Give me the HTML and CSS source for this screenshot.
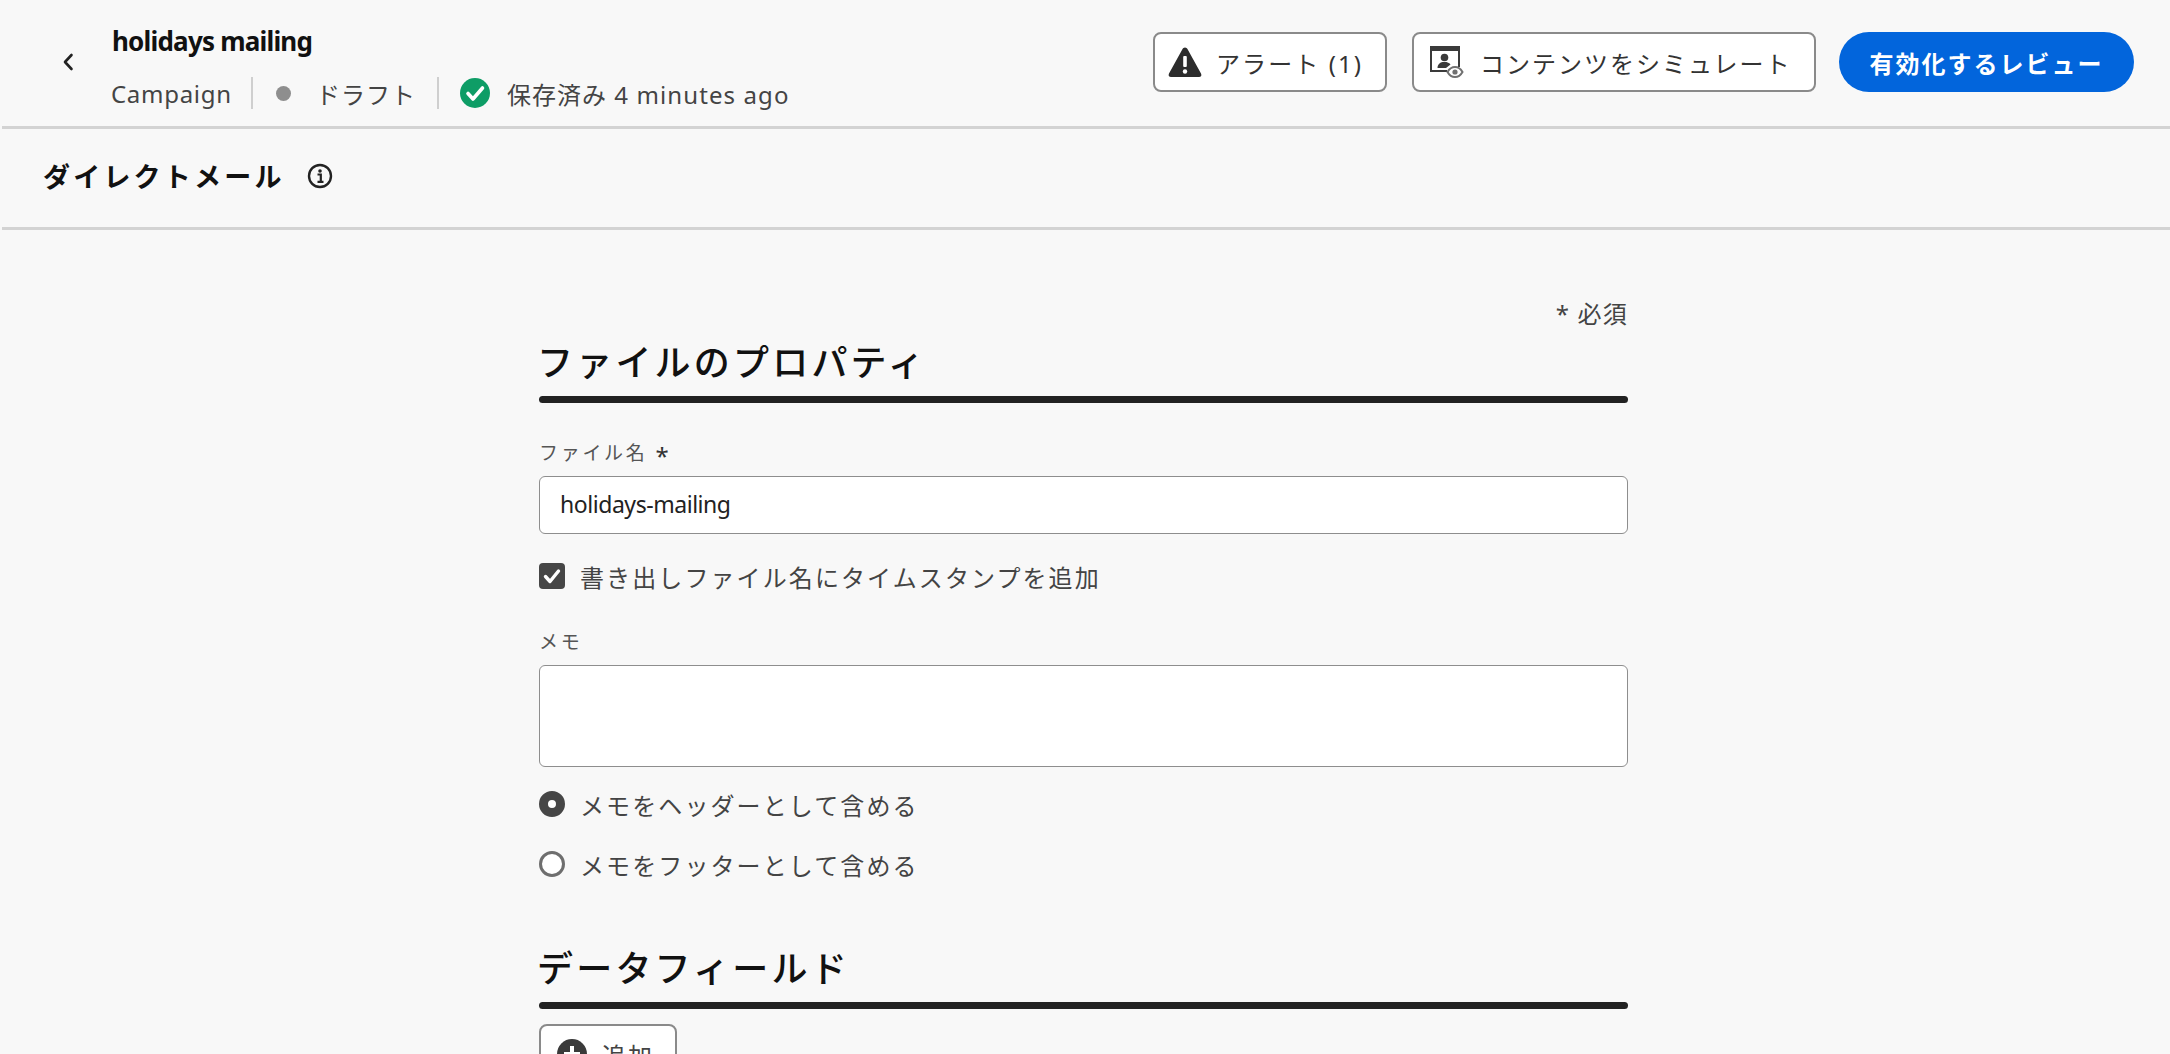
FILE: index.html
```html
<!DOCTYPE html>
<html lang="ja">
<head>
<meta charset="utf-8">
<title>holidays mailing</title>
<link rel="stylesheet" href="styles.css">
</head>
<body>
<header class="topbar">
  <div class="top-left">
    <svg class="back" viewBox="0 0 14 20"><path d="M10.5 3 L4 10 L10.5 17" fill="none" stroke="#222" stroke-width="2.6" stroke-linecap="round" stroke-linejoin="round"/></svg>
    <div class="title-block">
      <div class="title">holidays mailing</div>
      <div class="meta">
        <span class="meta-item">Campaign</span>
        <span class="meta-sep"></span>
        <span class="dot"></span>
        <span class="meta-jp">ドラフト</span>
        <span class="meta-sep sep2"></span>
        <svg class="ok" viewBox="0 0 30 30"><circle cx="15" cy="15" r="15" fill="#0e9d66"/><path d="M8 15.5 L13 21 L22.5 10" fill="none" stroke="#fff" stroke-width="3.6" stroke-linecap="round" stroke-linejoin="round"/></svg>
        <span class="saved"><span class="jp-saved">保存済み</span> 4 minutes ago</span>
      </div>
    </div>
  </div>
  <div class="actions">
    <button class="btn btn-alert">
      <svg class="ic-alert" viewBox="0 0 34 32"><path d="M17 1.5 C18.2 1.5 19 2.2 19.6 3.3 L33 27.5 C34 29.5 33 31 31 31 H3 C1 31 0 29.5 1 27.5 L14.4 3.3 C15 2.2 15.8 1.5 17 1.5Z" fill="#2c2c2c"/><rect x="15.2" y="10" width="3.6" height="11" rx="1" fill="#fff"/><circle cx="17" cy="25.5" r="2.2" fill="#fff"/></svg>
      <span>アラート (1)</span>
    </button>
    <button class="btn btn-sim">
      <svg class="ic-sim" viewBox="0 0 34 32"><path d="M17 25 H1 V1 H29 V21" fill="none" stroke="#3a3a3a" stroke-width="2"/><rect x="0" y="0" width="30" height="5" fill="#3a3a3a"/><circle cx="14.5" cy="11.5" r="3.8" fill="#3a3a3a"/><path d="M7.5 22 C7.5 18 10.5 16.5 12.5 16 L16.5 16 C18 16.5 19.5 17 20.5 18.5 L16 22Z" fill="#3a3a3a"/><path d="M17.5 26 C19.5 22.5 22.5 21 25 21 C27.5 21 30.5 22.5 32.5 26 C30.5 29.5 27.5 31 25 31 C22.5 31 19.5 29.5 17.5 26Z" fill="#fff" stroke="#707070" stroke-width="2"/><circle cx="25" cy="26" r="2.6" fill="#707070"/></svg>
      <span>コンテンツをシミュレート</span>
    </button>
    <button class="btn btn-primary">有効化するレビュー</button>
  </div>
</header>

<section class="subbar">
  <h2 class="subtitle">ダイレクトメール</h2>
  <svg class="info" viewBox="0 0 26 26"><circle cx="13" cy="13" r="11" fill="none" stroke="#222" stroke-width="2.4"/><circle cx="13" cy="8" r="1.8" fill="#222"/><path d="M10.5 11.5 H13.8 V18.5 M10.5 18.8 H16.5" fill="none" stroke="#222" stroke-width="2.2"/></svg>
</section>

<main class="form">
  <div class="required">* 必須</div>
  <h3 class="section-title">ファイルのプロパティ</h3>
  <div class="rule"></div>
  <label class="field-label first">ファイル名<span class="star">*</span></label>
  <div class="input">holidays-mailing</div>
  <div class="choice check-row">
    <span class="checkbox"><svg viewBox="0 0 26 26"><path d="M6.5 13.5 L11 18.5 L19.5 8" fill="none" stroke="#fff" stroke-width="3.4" stroke-linecap="round" stroke-linejoin="round"/></svg></span>
    <span>書き出しファイル名にタイムスタンプを追加</span>
  </div>
  <label class="field-label memo">メモ</label>
  <div class="textarea"></div>
  <div class="choice radio-row one"><span class="radio on"></span><span>メモをヘッダーとして含める</span></div>
  <div class="choice radio-row two"><span class="radio"></span><span>メモをフッターとして含める</span></div>
  <h3 class="section-title second">データフィールド</h3>
  <div class="rule"></div>
  <button class="btn btn-add">
    <svg class="ic-add" viewBox="0 0 30 30"><circle cx="15" cy="15" r="15" fill="#3a3a3a"/><rect x="13" y="7" width="4" height="16" fill="#fff"/><rect x="7" y="13" width="16" height="4" fill="#fff"/></svg>
    <span>追加</span>
  </button>
</main>
</body>
</html>
```
FILE: styles.css
```css
* { box-sizing: border-box; }
html, body { margin: 0; padding: 0; height: 1054px; overflow: hidden; }
body {
  background: #f8f8f8;
  color: #2c2c2c;
  font-family: "Noto Sans", "Noto Sans CJK JP", sans-serif;
}
svg { flex: none; }
.topbar {
  height: 129px;
  border-bottom: 3px solid #d3d3d3;
  margin-left: 2px;
  display: flex;
  justify-content: space-between;
  align-items: flex-start;
}
.top-left { display: flex; align-items: flex-start; }
.back { width: 14px; height: 20px; margin: 52px 0 0 59px; }
.title-block { margin-left: 37px; }
.title {
  font-size: 26px;
  font-weight: 700;
  line-height: 34px;
  margin-top: 24px;
  color: #111;
  letter-spacing: -0.8px;
}
.meta {
  display: flex;
  align-items: center;
  height: 36px;
  margin-top: 17px;
  font-size: 24px;
  color: #444;
}
.meta-item { width: 120px; letter-spacing: 0.7px; white-space: nowrap; margin-left: -1px; }
.meta-sep { width: 2px; height: 32px; background: #cfcfcf; margin-left: 20px; }
.sep2 { margin-left: 21px; }
.dot { width: 15px; height: 15px; border-radius: 50%; background: #8e8e8e; margin-left: 23px; }
.meta-jp { margin-left: 25px; letter-spacing: 1px; }
.ok { width: 30px; height: 30px; margin-left: 21px; }
.saved { margin-left: 17px; white-space: nowrap; letter-spacing: 1.1px; }
.jp-saved { letter-spacing: 1px; }
.actions { display: flex; align-items: center; margin: 32px 36px 0 0; }
.btn {
  font-family: inherit;
  height: 60px;
  border: 2px solid #8a8a8a;
  border-radius: 8px;
  background: #fff;
  color: #333;
  font-size: 24px;
  display: flex;
  align-items: center;
  padding: 0;
  white-space: nowrap;
}
.btn-alert { width: 234px; padding-left: 13px; letter-spacing: 2.1px; }
.ic-alert { width: 34px; height: 32px; margin-right: 14px; }
.btn-sim { width: 404px; margin-left: 25px; padding-left: 16px; letter-spacing: 2px; }
.ic-sim { width: 34px; height: 32px; margin-right: 16px; }
.btn-primary {
  width: 295px;
  margin-left: 23px;
  border: 0;
  border-radius: 30px;
  background: #0265dc;
  color: #fff;
  font-weight: 700;
  letter-spacing: 2px;
  justify-content: center;
}
.subbar {
  height: 101px;
  border-bottom: 3px solid #d3d3d3;
  margin-left: 2px;
  padding-left: 41px;
  padding-bottom: 5px;
  display: flex;
  align-items: center;
}
.subtitle { margin: 0; font-size: 27px; font-weight: 700; letter-spacing: 3.2px; color: #111; }
.info { width: 26px; height: 26px; margin-left: 22px; }
.form { width: 1089px; margin-left: 539px; }
.required { text-align: right; font-size: 24px; line-height: 30px; margin-top: 69px; color: #444; letter-spacing: 1.2px; }
.section-title { margin: 11px 0 0 -2px; font-size: 36px; font-weight: 500; letter-spacing: 3.2px; line-height: 46px; color: #111; }
.section-title.second { margin-top: 67px; }
.rule { height: 7px; background: #222; border-radius: 4px; margin-top: 10px; }
.field-label { display: block; font-size: 19px; line-height: 26px; letter-spacing: 2.7px; color: #555; }
.field-label.first { margin-top: 35px; }
.star { margin-left: 8px; font-size: 24px; color: #333; position: relative; top: 5px; }
.input {
  height: 58px;
  margin-top: 10px;
  background: #fff;
  border: 1px solid #8e8e8e;
  border-radius: 6px;
  font-size: 23px;
  line-height: 55px;
  padding-left: 20px;
  color: #222;
  letter-spacing: -0.45px;
}
.choice { display: flex; align-items: center; font-size: 24px; letter-spacing: 2.1px; color: #444; height: 30px; }
.check-row { margin-top: 27px; }
.checkbox { width: 26px; height: 26px; border-radius: 4px; background: #464646; margin-right: 15px; }
.checkbox svg { display: block; }
.field-label.memo { margin-top: 38px; }
.textarea { height: 102px; margin-top: 10px; background: #fff; border: 1px solid #8e8e8e; border-radius: 6px; }
.radio { width: 26px; height: 26px; border-radius: 50%; border: 3px solid #6e6e6e; background: #fff; margin-right: 15px; flex: none; }
.radio.on { border: 9px solid #464646; }
.radio-row.one { margin-top: 22px; }
.radio-row.two { margin-top: 30px; }
.btn-add { width: 138px; height: 60px; margin-top: 15px; padding-left: 16px; color: #444; letter-spacing: 2px; }
.ic-add { width: 30px; height: 30px; margin-right: 15px; }
```
